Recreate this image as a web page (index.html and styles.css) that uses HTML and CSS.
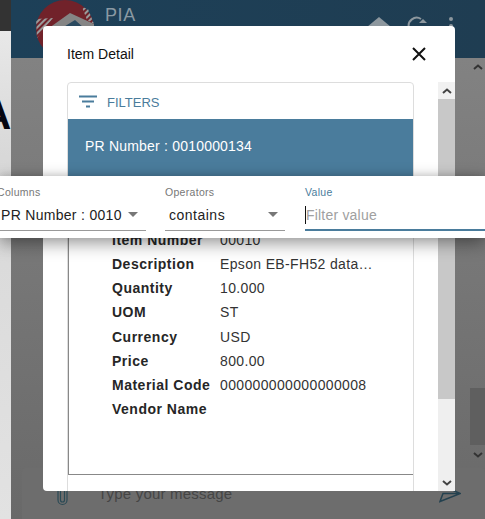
FILE: index.html
```html
<!DOCTYPE html>
<html lang="en">
<head>
  <meta charset="UTF-8">
  <title>Item Detail - PIA</title>
  <link rel="stylesheet" href="styles.css">
</head>
<body>

<div class="page">
  <div class="side">
    <div class="side-top"></div>
    <div class="side-logo">A</div>
  </div>

  <div class="app">
    <header class="app-bar">
      <svg class="logo" width="60" height="58" viewBox="0 0 60 58">
        <defs>
          <pattern id="hatch" width="4" height="4" patternUnits="userSpaceOnUse" patternTransform="rotate(45)">
            <rect width="2" height="4" fill="#9a9a9a"/>
          </pattern>
        </defs>
        <circle cx="30" cy="29" r="29" fill="#71222a"/>
        <path d="M1 19 L18 18 L2 38 Z" fill="url(#hatch)"/>
        <path d="M47 7 L53 9 L59 24 L52 20 Z" fill="url(#hatch)"/>
        <path d="M14 28 L35 13 L59 24 L59 40 L14 40 Z" fill="#858585"/>
        <path d="M27 28 L40 20 L49 28 L49 40 L27 40 Z" fill="#2b4a60"/>
      </svg>
      <span class="app-name">PIA</span>
      <div class="app-icons">
        <svg width="26" height="20" viewBox="0 0 26 20"><path d="M13 3 L25 13 H1 Z" fill="#8d979e"/></svg>
        <svg width="20" height="20" viewBox="0 0 20 20"><path d="M2 14 A8 8 0 0 1 14 5" fill="none" stroke="#8d979e" stroke-width="2"/><path d="M12 9 L16 5 L20 9 Z" fill="#8d979e"/></svg>
        <svg class="kebab" width="6" height="20" viewBox="0 0 6 20"><circle cx="3" cy="5" r="2" fill="#8d979e"/><circle cx="3" cy="12" r="2" fill="#8d979e"/></svg>
      </div>
    </header>

    <main class="app-main">
      <div class="main-scroll">
        <svg class="chev" width="12" height="8" viewBox="0 0 12 8"><path d="M2 6 L6 2.5 L10 6" fill="none" stroke="#333" stroke-width="2"/></svg>
        <div class="main-thumb"></div>
        <svg class="chev" width="12" height="8" viewBox="0 0 12 8"><path d="M2 2 L6 5.5 L10 2" fill="none" stroke="#333" stroke-width="2"/></svg>
      </div>
      <div class="msg-bar">
        <svg width="11" height="26" viewBox="0 0 11 26"><path d="M3.5 4 V19 A2 2 0 0 0 7.500 19 V3 M1 4 V19 A4.500 4.500 0 0 0 10 19 V4" fill="none" stroke="#2b4a55" stroke-width="1.200"/></svg>
        <span class="msg-text">Type your message</span>
        <svg class="send" width="22" height="18" viewBox="0 0 22 18"><path d="M4 1 L21.5 8.5 L1 16.5 L4 8.5 L21.5 8.5" fill="none" stroke="#24414f" stroke-width="1.5"/></svg>
      </div>
    </main>
  </div>
</div>

<div class="modal">
  <div class="modal-head">
    <span class="modal-title">Item Detail</span>
    <svg width="16" height="16" viewBox="0 0 16 16"><path d="M2 2 L14 14 M14 2 L2 14" stroke="#111" stroke-width="2"/></svg>
  </div>
  <div class="modal-body">
    <div class="modal-content">
      <div class="card">
        <div class="toolbar">
          <svg width="20" height="14" viewBox="0 0 20 14"><path d="M1 1.5 H19 M4 6.5 H16 M8 11.5 H12" stroke="#4a7c9c" stroke-width="2"/></svg>
          <span>FILTERS</span>
        </div>
        <div class="pr-row">PR Number : 0010000134</div>
        <div class="items">
          <div class="item-label">Item Number</div><div class="item-value">00010</div>
          <div class="item-label">Description</div><div class="item-value">Epson EB-FH52 data projector</div>
          <div class="item-label">Quantity</div><div class="item-value">10.000</div>
          <div class="item-label">UOM</div><div class="item-value">ST</div>
          <div class="item-label">Currency</div><div class="item-value">USD</div>
          <div class="item-label">Price</div><div class="item-value">800.00</div>
          <div class="item-label">Material Code</div><div class="item-value">000000000000000008</div>
          <div class="item-label">Vendor Name</div><div class="item-value"></div>
        </div>
      </div>
    </div>
    <div class="modal-scroll">
      <div class="scroll-btn"><svg width="12" height="8" viewBox="0 0 12 8"><path d="M2 6 L6 2.5 L10 6" fill="none" stroke="#444" stroke-width="2"/></svg></div>
      <div class="scroll-thumb"></div>
      <div class="scroll-track"><svg width="12" height="8" viewBox="0 0 12 8"><path d="M2 2 L6 5.5 L10 2" fill="none" stroke="#444" stroke-width="2"/></svg></div>
    </div>
  </div>
</div>

<div class="filter-panel">
  <div class="field field-col">
    <label>Columns</label>
    <div class="field-box"><span>PR Number : 0010</span><i class="arrow"></i></div>
  </div>
  <div class="field field-op">
    <label>Operators</label>
    <div class="field-box"><span>contains</span><i class="arrow"></i></div>
  </div>
  <div class="field field-val">
    <label>Value</label>
    <div class="field-box"><span class="placeholder">Filter value</span></div>
  </div>
</div>

</body>
</html>
```

FILE: styles.css
```css
:root {
  --bleu: #4a7c9c;
}

* {
  box-sizing: border-box;
}

html, body {
  margin: 0;
  height: 100%;
  overflow: hidden;
}

body {
  font-family: "Liberation Sans", Arial, sans-serif;
  background-color: #e2e2e2;
  position: relative;
}

.page {
  display: flex;
  width: 485px;
  height: 519px;
}

/* what is left of the page behind the app */
.side {
  width: 11px;
  overflow: hidden;
  background: linear-gradient(#ececec, #d8d8d8 30%, #e2e2e2);
}

.side-top {
  height: 31px;
  background-color: #333;
}

.side-logo {
  margin: 60px 0 0 -19px;
  font-size: 42px;
  line-height: 48px;
  font-weight: bold;
  color: #050510;
}

.app {
  flex: 1;
  display: flex;
  flex-direction: column;
}

.app-bar {
  height: 58px;
  display: flex;
  background: linear-gradient(90deg, #1d4058, #1f3d52);
  overflow: hidden;
}

.logo {
  margin-left: 24px;
  flex-shrink: 0;
}

.app-name {
  margin: 4px 0 0 10px;
  font-size: 18px;
  line-height: 22px;
  letter-spacing: 0.6px;
  color: #8a99a3;
}

.app-icons {
  margin: 14px 0 0 auto;
  padding-right: 31px;
  display: flex;
  gap: 15px;
}

.kebab {
  margin-left: 6px;
}

.app-main {
  flex: 1;
  position: relative;
  display: flex;
  flex-direction: column;
  justify-content: flex-end;
  background: linear-gradient(#828282, #696969);
}

.main-scroll {
  position: absolute;
  top: 0;
  right: 0;
  bottom: 60px;
  width: 15px;
  display: flex;
  flex-direction: column;
  align-items: center;
  padding-top: 5px;
}

.main-thumb {
  margin: auto 0 6px;
  width: 15px;
  height: 57px;
  flex-shrink: 0;
  background-color: #5f5f5f;
}

.msg-bar {
  height: 51px;
  margin-left: 11px;
  padding: 0 24px 0 35px;
  display: flex;
  align-items: center;
  background-color: #6d6d6d;
  border-radius: 4px 4px 0 0;
}

.msg-text {
  margin-left: 30px;
  font-size: 15px;
  color: #454545;
  letter-spacing: 0.2px;
}

.send {
  margin-left: auto;
}

/* dialog */
.modal {
  position: absolute;
  left: 43px;
  top: 26px;
  width: 412px;
  height: 465px;
  display: flex;
  flex-direction: column;
  background-color: white;
  border-radius: 4px;
}

.modal-head {
  height: 56px;
  padding: 0 28px 0 24px;
  display: flex;
  align-items: center;
  justify-content: space-between;
}

.modal-title {
  font-size: 14px;
  color: #111;
}

.modal-body {
  flex: 1;
  min-height: 0;
  display: flex;
}

.modal-content {
  flex: 1;
  padding: 0 24px;
  overflow: hidden;
}

.card {
  height: 420px;
  border: 1px solid #ddd;
  border-radius: 4px 4px 0 0;
}

.toolbar {
  height: 36px;
  padding: 2px 0 0 10px;
  display: flex;
  align-items: center;
  gap: 9px;
  font-size: 13px;
  color: var(--bleu);
}

.pr-row {
  height: 109px;
  padding: 19px 17px;
  background-color: var(--bleu);
  color: white;
  font-size: 14px;
  line-height: 17px;
  letter-spacing: 0.2px;
}

.items {
  height: 247px;
  padding-left: 43px;
  display: grid;
  grid-template-columns: 108px 155px;
  grid-auto-rows: 24.14px;
  align-items: center;
  border-left: 1px solid #888;
  border-bottom: 1px solid #888;
  font-size: 14px;
  color: #333;
  letter-spacing: 0.35px;
}

.item-label {
  font-weight: bold;
  color: #262626;
  letter-spacing: 0.5px;
  white-space: nowrap;
}

.item-value {
  overflow: hidden;
  white-space: nowrap;
  text-overflow: ellipsis;
}

.modal-scroll {
  width: 17px;
  display: flex;
  flex-direction: column;
}

.scroll-btn {
  height: 17px;
  display: flex;
  align-items: center;
  justify-content: center;
  background-color: #f1f1f1;
}

.scroll-thumb {
  height: 300px;
  background-color: #c8c8c8;
}

.scroll-track {
  flex: 1;
  padding-bottom: 4px;
  display: flex;
  align-items: flex-end;
  justify-content: center;
  background-color: #efefef;
}

/* filter popup */
.filter-panel {
  position: absolute;
  left: 0;
  top: 176px;
  width: 485px;
  height: 62px;
  display: flex;
  overflow: hidden;
  background-color: white;
  box-shadow: 0 5px 16px rgba(0,0,0,0.42), 0 -2px 6px rgba(0,0,0,0.08);
}

.field {
  padding-top: 9px;
}

.field label {
  display: block;
  height: 14px;
  font-size: 10.5px;
  line-height: 14px;
  color: #777;
  letter-spacing: 0.3px;
}

.field-box {
  height: 31px;
  margin-top: 1px;
  padding-bottom: 1px;
  display: flex;
  align-items: center;
  justify-content: space-between;
  border-bottom: 1px solid #999;
  font-size: 14px;
  color: #222;
  letter-spacing: 0.5px;
  white-space: nowrap;
}

.field-col {
  width: 146px;
  margin-right: 19px;
}

.field-col label {
  margin-left: -3px;
}

.field-col .field-box {
  padding: 0 8px 1px 1px;
  letter-spacing: 0.3px;
}

.field-op {
  width: 120px;
  margin-right: 20px;
}

.field-op .field-box {
  padding: 0 7px 1px 4px;
}

.field-val {
  flex: 1;
}

.field-val label {
  color: var(--bleu);
}

.field-val .field-box {
  justify-content: flex-start;
  padding-bottom: 0;
  border-bottom: 2px solid var(--bleu);
  letter-spacing: 0.2px;
}

.placeholder {
  height: 18px;
  line-height: 18px;
  border-left: 1px solid #111;
  color: #a0a0a0;
}

.arrow {
  width: 0;
  height: 0;
  border-left: 5px solid transparent;
  border-right: 5px solid transparent;
  border-top: 5px solid #777;
}
```
